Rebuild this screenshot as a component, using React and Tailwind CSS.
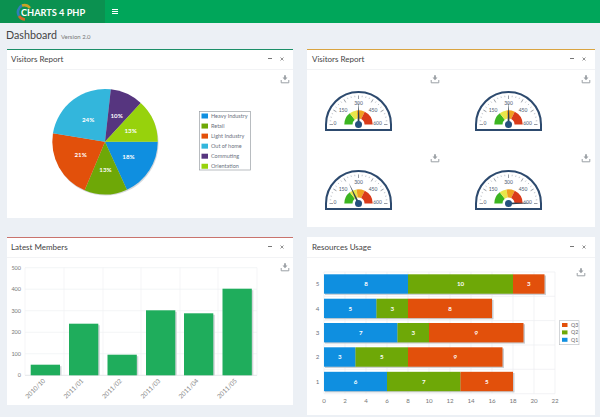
const FONT = "font-['Lato','Noto_Sans',sans-serif]";

function Dl({ x, y }) {
  return (
    <g transform={`translate(${x} ${y})`} fill="none">
      <path d="M-3.8 1v2.8h7.6V1" stroke="#9ba0a5" strokeWidth="1" />
      <path d="M-.9-3.8h1.8v2.4h1.6L0 1.2-2.5-1.4H-.9z" fill="#9ba0a5" />
    </g>
  );
}

function Card({ title, topClass, heightClass, padClass, children }) {
  return (
    <section className={`bg-white ${heightClass} flex flex-col`}>
      <div className={`h-px shrink-0 ${topClass}`} />
      <header className={`h-[20px] ${padClass} pr-[5px] pb-[2px] flex items-center justify-between border-b border-b-[#f2f3f5] shrink-0`}>
        <h2 className="text-[8px] leading-none text-[#444444]">{title}</h2>
        <div className="flex items-center gap-[8px] pr-[4px]">
          <span className="w-[4px] h-px bg-[#777777]" />
          <svg width="4" height="4" viewBox="0 0 4 4"><path d="M.5.5l3 3M3.5.5l-3 3" stroke="#888" strokeWidth="0.9" /></svg>
        </div>
      </header>
      {children}
    </section>
  );
}

function polar(cx, cy, r, deg) {
  const a = (deg * Math.PI) / 180;
  return [cx + r * Math.cos(a), cy + r * Math.sin(a)];
}

const pieData = [
  { v: 18, c: "#0f8fe0", n: "Heavy Industry" },
  { v: 13, c: "#6ea807", n: "Retail" },
  { v: 21, c: "#e2500b", n: "Light Industry" },
  { v: 24, c: "#33b6dc", n: "Out of home" },
  { v: 10, c: "#56357f", n: "Commuting" },
  { v: 13, c: "#97d20c", n: "Orientation" },
];

function Pie() {
  const cx = 105, cy = 141.7, r = 52.7;
  let start = 0;
  const slices = pieData.map((d) => {
    const sweep = (d.v / 99) * 360;
    const end = start + sweep;
    const [x1, y1] = polar(cx, cy, r, start);
    const [x2, y2] = polar(cx, cy, r, end);
    const [lx, ly] = polar(cx, cy, r * 0.53, start + sweep / 2);
    const s = { ...d, path: `M${cx} ${cy}L${x1} ${y1}A${r} ${r} 0 0 1 ${x2} ${y2}Z`, lx, ly };
    start = end;
    return s;
  });
  return (
    <svg className="block" width="286" height="148" viewBox="7 70 286 148">
      <Dl x={285} y={79} />
      <circle cx={cx + 0.8} cy={cy + 1.2} r={r} fill="#d5d8dc" />
      {slices.map((s) => <path key={s.n} d={s.path} fill={s.c} />)}
      {slices.map((s) => (
        <text key={s.n} x={s.lx} y={s.ly + 2.2} textAnchor="middle" fontSize="6.2" fontWeight="700" fill="#ffffff">{s.v}%</text>
      ))}
      <rect x="199.5" y="111.5" width="51" height="58.5" fill="#fff" stroke="#9aa0a6" strokeWidth="0.7" />
      {pieData.map((d, i) => (
        <g key={d.n}>
          <rect x="201.5" y={113.5 + i * 10.05} width="6.5" height="5" fill={d.c} />
          <text x="211" y={118 + i * 10.05} fontSize="5.5" fill="#6b7280">{d.n}</text>
        </g>
      ))}
    </svg>
  );
}

function Gauge({ cx, cy, value }) {
  const navy = "#2d4a6e";
  const ticks = [];
  for (let i = 0; i <= 24; i++) {
    const a = 180 + i * 7.5;
    const major = i % 4 === 0;
    const [x1, y1] = polar(cx, cy, 29, a);
    const [x2, y2] = polar(cx, cy, major ? 25.5 : 27.5, a);
    ticks.push(<line key={i} x1={x1} y1={y1} x2={x2} y2={y2} stroke="#6b7280" strokeWidth={major ? 0.7 : 0.4} />);
  }
  const band = (a0, a1, color) => {
    const ro = 14.2, ri = 6;
    const [x1, y1] = polar(cx, cy, ro, a0);
    const [x2, y2] = polar(cx, cy, ro, a1);
    const [x3, y3] = polar(cx, cy, ri, a1);
    const [x4, y4] = polar(cx, cy, ri, a0);
    return <path d={`M${x1} ${y1}A${ro} ${ro} 0 0 1 ${x2} ${y2}L${x3} ${y3}A${ri} ${ri} 0 0 0 ${x4} ${y4}Z`} fill={color} />;
  };
  const na = 180 + (value / 600) * 180;
  const [nx, ny] = polar(cx, cy, 23, na);
  const [bx, by] = polar(cx, cy, 1.1, na + 90);
  const [ex, ey] = polar(cx, cy, 1.1, na - 90);
  const labels = [
    ["0", cx - 23.5, cy + 0.5],
    ["150", cx - 15.5, cy - 12.5],
    ["300", cx, cy - 19.5],
    ["450", cx + 14.5, cy - 12.5],
    ["600", cx + 19, cy + 0.5],
  ];
  return (
    <g>
      <path d={`M${cx - 32.5} ${cy + 5.5}V${cy}A32.5 32.5 0 0 1 ${cx + 32.5} ${cy}V${cy + 5.5}Z`} fill="#fff" stroke={navy} strokeWidth="2" />
      {ticks}
      {band(180, 232, "#3cb521")}
      {band(232, 262, "#e9e64a")}
      {band(262, 296, "#f0a020")}
      {band(296, 360, "#d93b1a")}
      {labels.map(([t, x, y]) => (
        <text key={t} x={x} y={y} textAnchor="middle" fontSize="5" fill="#4a5a70">{t}</text>
      ))}
      <path d={`M${bx} ${by}L${nx} ${ny}L${ex} ${ey}Z`} fill="#2f3f4f" />
      <circle cx={cx} cy={cy} r="3.5" fill="#24517f" />
    </g>
  );
}

function Gauges() {
  return (
    <svg className="block" width="288" height="157" viewBox="307 70 288 157">
      <Dl x={435} y={79} />
      <Dl x={586} y={79} />
      <Dl x={435} y={158} />
      <Dl x={586} y={158} />
      <Gauge cx={358.5} cy={124.5} value={302} />
      <Gauge cx={508.5} cy={124.5} value={302} />
      <Gauge cx={358.5} cy={203.5} value={216} />
      <Gauge cx={508.5} cy={203.5} value={595} />
    </svg>
  );
}

const bars = [
  ["2010/10", 30.7, 364.7],
  ["2011/01", 69, 323.7],
  ["2011/02", 107.5, 354.7],
  ["2011/03", 146, 310.3],
  ["2011/04", 184, 313.3],
  ["2011/05", 222.5, 288.7],
];

function Columns() {
  const base = 375.3;
  return (
    <svg className="block" width="286" height="147" viewBox="7 258 286 147">
      <Dl x={285} y={267} />
      {[0, 100, 200, 300, 400, 500].map((v, i) => {
        const y = base - i * 21.52;
        return (
          <g key={v}>
            <line x1="25" x2="257" y1={y} y2={y} stroke={i === 0 ? "#d8dbdf" : "#eef0f2"} strokeWidth="0.7" />
            <text x="21" y={y + 1.8} textAnchor="end" fontSize="5.5" fill="#777">{v}</text>
          </g>
        );
      })}
      {[25, 64, 103, 141, 180, 218, 257].map((x) => (
        <line key={x} x1={x} x2={x} y1="267.7" y2={base} stroke="#f0f1f3" strokeWidth="0.7" />
      ))}
      {bars.map(([n, x, top]) => (
        <g key={n}>
          <rect x={x + 1.5} y={top + 1.5} width="29.3" height={base - top - 1.5} fill="#d2d5d8" />
          <rect x={x} y={top} width="29.3" height={base - top} fill="#1fad5c" />
          <text transform={`translate(${x + 15} ${base + 6}) rotate(-45)`} textAnchor="end" fontSize="6.4" fill="#888">{n}</text>
        </g>
      ))}
    </svg>
  );
}

const stackData = [
  ["5", 274.3, [8, 10, 3]],
  ["4", 298.7, [5, 3, 8]],
  ["3", 323, [7, 3, 9]],
  ["2", 347.3, [3, 5, 9]],
  ["1", 371.8, [6, 7, 5]],
];
const stackColors = ["#0f8fe0", "#6ea807", "#e2500b"];

function Stacked() {
  const x0 = 324, unit = 10.5;
  return (
    <svg className="block" width="288" height="157" viewBox="307 258 288 157">
      <Dl x={581} y={272} />
      {Array.from({ length: 12 }, (_, i) => i * 2).map((v) => {
        const x = x0 + v * unit;
        return (
          <g key={v}>
            <line x1={x} x2={x} y1="272" y2="393.7" stroke="#eceef0" strokeWidth="0.7" />
            <text x={x} y="403" textAnchor="middle" fontSize="6.2" fill="#777">{v}</text>
          </g>
        );
      })}
      {[272, 296.3, 320.6, 345, 369.3, 393.7].map((y) => (
        <line key={y} x1={x0} x2={x0 + 231} y1={y} y2={y} stroke="#eceef0" strokeWidth="0.7" />
      ))}
      {stackData.map(([label, y, vals]) => {
        let acc = 0;
        const total = vals[0] + vals[1] + vals[2];
        return (
          <g key={label}>
            <text x="317.5" y={y + 12} textAnchor="middle" fontSize="6.2" fill="#6b7280">{label}</text>
            <rect x={x0 + 1} y={y + 1.2} width={total * unit + 0.5} height="19.4" fill="#c9ccd0" />
            {vals.map((v, i) => {
              const x = x0 + acc * unit;
              acc += v;
              return (
                <g key={i}>
                  <rect x={x} y={y} width={v * unit} height="19.4" fill={stackColors[i]} />
                  <text x={x + (v * unit) / 2} y={y + 12} textAnchor="middle" fontSize="6.2" fontWeight="700" fill="#fff">{v}</text>
                </g>
              );
            })}
          </g>
        );
      })}
      <rect x="559.5" y="320.7" width="19.5" height="24" fill="#fff" stroke="#b5b9be" strokeWidth="0.6" />
      {[["Q3", "#e2500b"], ["Q2", "#6ea807"], ["Q1", "#0f8fe0"]].map(([t, c], i) => (
        <g key={t}>
          <rect x="562" y={323 + i * 7.4} width="5.5" height="4" fill={c} />
          <text x="571" y={327 + i * 7.4} fontSize="5.2" fill="#666">{t}</text>
        </g>
      ))}
    </svg>
  );
}

function Logo() {
  return (
    <div className="w-[105px] h-full bg-[#0b9150] flex items-center pl-[16px] shrink-0 relative">
      <svg className="absolute left-[16px] top-[3px]" width="17" height="18" viewBox="0 0 17 18" fill="none">
        <path d="M3 13A7.5 7.5 0 0 1 6 2.5" stroke="#2f7fb8" strokeWidth="2.6" />
        <path d="M6 2.5A7.5 7.5 0 0 1 14 5" stroke="#c9a227" strokeWidth="2.6" />
        <path d="M3 13A7.5 7.5 0 0 0 9 16.5" stroke="#d36b2a" strokeWidth="2.6" />
      </svg>
      <span className="relative text-white text-[10px] font-bold leading-none ml-[5px] whitespace-nowrap origin-left scale-x-[0.92]">CHARTS 4 PHP</span>
    </div>
  );
}

export default function App() {
  return (
    <div className={`w-[600px] h-[417px] overflow-hidden bg-[#ecf0f5] ${FONT}`}>
      <nav className="h-[23px] bg-[#00a65a] flex items-center">
        <Logo />
        <div className="ml-[7px] w-[6px] flex flex-col gap-[1px]">
          <span className="h-px bg-white" />
          <span className="h-px bg-white" />
          <span className="h-px bg-white" />
        </div>
      </nav>
      <main className="pl-[7px] pr-[5px]">
        <div className="h-[26px] flex items-center gap-[4px] pb-[1px] -ml-[1px]">
          <h1 className="text-[10.7px] leading-none text-[#444444]">Dashboard</h1>
          <span className="text-[6px] leading-none text-[#777777] pt-[2px]">Version 2.0</span>
        </div>
        <div className="grid grid-cols-[286px_288px] gap-x-[14px]">
          <div className="flex flex-col gap-[19px]">
            <Card title="Visitors Report" topClass="bg-[#1c8f68]" heightClass="h-[169px]" padClass="pl-[4px]"><Pie /></Card>
            <Card title="Latest Members" topClass="bg-[#c9736d]" heightClass="h-[168px]" padClass="pl-[4px]"><Columns /></Card>
          </div>
          <div className="flex flex-col gap-[10px]">
            <Card title="Visitors Report" topClass="bg-[#d9a441]" heightClass="h-[178px]" padClass="pl-[5px]"><Gauges /></Card>
            <Card title="Resources Usage" topClass="bg-white" heightClass="h-[178px]" padClass="pl-[5px]"><Stacked /></Card>
          </div>
        </div>
      </main>
    </div>
  );
}
